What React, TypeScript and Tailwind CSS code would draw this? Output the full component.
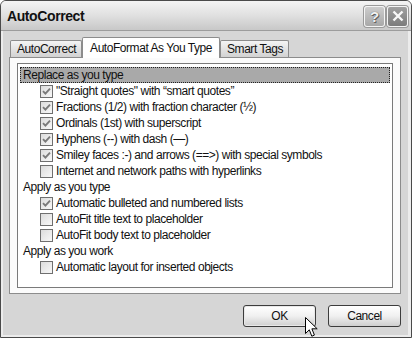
import React from "react";

const font = { fontFamily: '"Liberation Sans", Arial, sans-serif' };

type Row = { kind: "group"; label: string; selected?: boolean } | { kind: "item"; label: string; checked: boolean };

const rows: Row[] = [
  { kind: "group", label: "Replace as you type", selected: true },
  { kind: "item", label: "\"Straight quotes\" with \u201Csmart quotes\u201D", checked: true },
  { kind: "item", label: "Fractions (1/2) with fraction character (\u00BD)", checked: true },
  { kind: "item", label: "Ordinals (1st) with superscript", checked: true },
  { kind: "item", label: "Hyphens (--) with dash (\u2014)", checked: true },
  { kind: "item", label: "Smiley faces :-) and arrows (==>) with special symbols", checked: true },
  { kind: "item", label: "Internet and network paths with hyperlinks", checked: false },
  { kind: "group", label: "Apply as you type" },
  { kind: "item", label: "Automatic bulleted and numbered lists", checked: true },
  { kind: "item", label: "AutoFit title text to placeholder", checked: false },
  { kind: "item", label: "AutoFit body text to placeholder", checked: false },
  { kind: "group", label: "Apply as you work" },
  { kind: "item", label: "Automatic layout for inserted objects", checked: false },
];

function CheckBox({ checked }: { checked: boolean }) {
  return (
    <div className="w-[13px] h-[13px] shrink-0 border border-[#6f6f6f] bg-gradient-to-br from-[#dcdcdc] to-[#f8f8f8] flex items-center justify-center">
      {checked && (
        <svg width="9" height="9" viewBox="0 0 9 9">
          <path d="M1 4.2 L3.4 6.6 L8 1.6" stroke="#7a7a7a" strokeWidth="1.9" fill="none" />
        </svg>
      )}
    </div>
  );
}

function TitleButton({ children, dark }: { children: React.ReactNode; dark?: boolean }) {
  return (
    <div
      className={
        "w-[21px] h-[21px] rounded-[3px] border border-[#f4f4f4] flex items-center justify-center shadow-[0_0_0_1px_#9a9a9a] " +
        (dark ? "bg-gradient-to-b from-[#a0a0a0] to-[#7c7c7c]" : "bg-gradient-to-b from-[#cdcdcd] to-[#a8a8a8]")
      }
    >
      {children}
    </div>
  );
}

function Cursor() {
  return (
    <svg className="absolute left-[305px] top-[317px]" width="14" height="21" viewBox="0 0 14 21">
      <path
        d="M0.5 0.5 L0.5 16.5 L4.3 12.8 L6.8 19.2 L9.4 18.1 L6.9 11.8 L12.2 11.8 Z"
        fill="#ffffff"
        stroke="#000000"
        strokeWidth="1"
      />
    </svg>
  );
}

export default function App() {
  return (
    <div className="relative w-[412px] h-[338px] overflow-hidden" style={font}>
      <div className="w-full h-full flex flex-col border border-[#4a4a4a] bg-[#d6d6d6] rounded-t-[6px]">
        {/* title bar */}
        <div className="h-[30px] shrink-0 flex items-center justify-between pl-[6px] pr-[3px] bg-gradient-to-b from-[#f4f4f4] via-[#e0e0e0] to-[#c8c8c8] border-b border-[#9c9c9c] rounded-t-[5px]">
          <span className="text-[14px] font-bold text-[#111] tracking-[-0.4px] pt-[1px]">AutoCorrect</span>
          <div className="flex gap-[2px] pt-[1px]">
            <TitleButton>
              <span className="text-[15px] font-bold text-[#f2f2f2] leading-none [text-shadow:0_0_1px_#444,1px_1px_0_#666]">?</span>
            </TitleButton>
            <TitleButton dark>
              <svg width="12" height="12" viewBox="0 0 12 12">
                <path d="M1.5 1.5 L10.5 10.5 M10.5 1.5 L1.5 10.5" stroke="#f8f8f8" strokeWidth="2.4" />
              </svg>
            </TitleButton>
          </div>
        </div>

        {/* body */}
        <div className="flex-1 flex flex-col border-l-[2px] border-r-[3px] border-b-[2px] border-[#ececec] pl-[6px] pr-[7px] tracking-[-0.45px]">
          {/* tabs */}
          <div className="flex items-end pt-[5px] pl-[1px] h-[26px] text-[12px] text-[#111]">
            <div className="h-[17px] pl-[6px] pr-[5px] flex items-center border border-b-0 border-[#8c8c8c] bg-gradient-to-b from-[#f4f4f4] to-[#d2d2d2] rounded-t-[2px]">
              AutoCorrect
            </div>
            <div className="relative z-10 -mb-px h-[21px] px-[7px] flex items-start pt-[1px] border border-b-0 border-[#8c8c8c] bg-white rounded-t-[2px]">
              AutoFormat As You Type
            </div>
            <div className="h-[17px] pl-[6px] pr-[5px] flex items-center border border-b-0 border-[#8c8c8c] bg-gradient-to-b from-[#f4f4f4] to-[#d2d2d2] rounded-t-[2px]">
              Smart Tags
            </div>
          </div>

          {/* tab page */}
          <div className="h-[237px] bg-[#fbfbfb] border border-[#8c8c8c] pt-[5px] px-[7px] pb-[5px] flex">
            <div className="flex-1 bg-white border border-[#7a7a7a] pt-[3px] px-[2px] text-[12px] text-[#111]">
              {rows.map((r, i) =>
                r.kind === "group" ? (
                  <div
                    key={i}
                    className={
                      "h-[16px] flex items-center pl-[3px] " +
                      (r.selected ? "bg-[#a9a9a9] outline-1 outline-dotted outline-[#222] -outline-offset-1" : "")
                    }
                  >
                    {r.label}
                  </div>
                ) : (
                  <div key={i} className="h-[16px] flex items-center gap-[3px] pl-[20px]">
                    <CheckBox checked={r.checked} />
                    <span>{r.label}</span>
                  </div>
                )
              )}
            </div>
          </div>

          {/* buttons */}
          <div className="flex justify-end gap-[12px] pt-[11px] pr-[0px] text-[12px] text-[#111]">
            <div className="w-[73px] h-[22px] flex items-center justify-center rounded-[3px] border border-[#3c3c3c] bg-gradient-to-b from-[#ffffff] via-[#f0f0f0] to-[#cfcfcf] shadow-[inset_0_0_0_1px_#e8e8e8]">
              OK
            </div>
            <div className="w-[73px] h-[22px] flex items-center justify-center rounded-[3px] border border-[#3c3c3c] bg-gradient-to-b from-[#ffffff] via-[#f0f0f0] to-[#cfcfcf]">
              Cancel
            </div>
          </div>
        </div>
      </div>
      <Cursor />
    </div>
  );
}
